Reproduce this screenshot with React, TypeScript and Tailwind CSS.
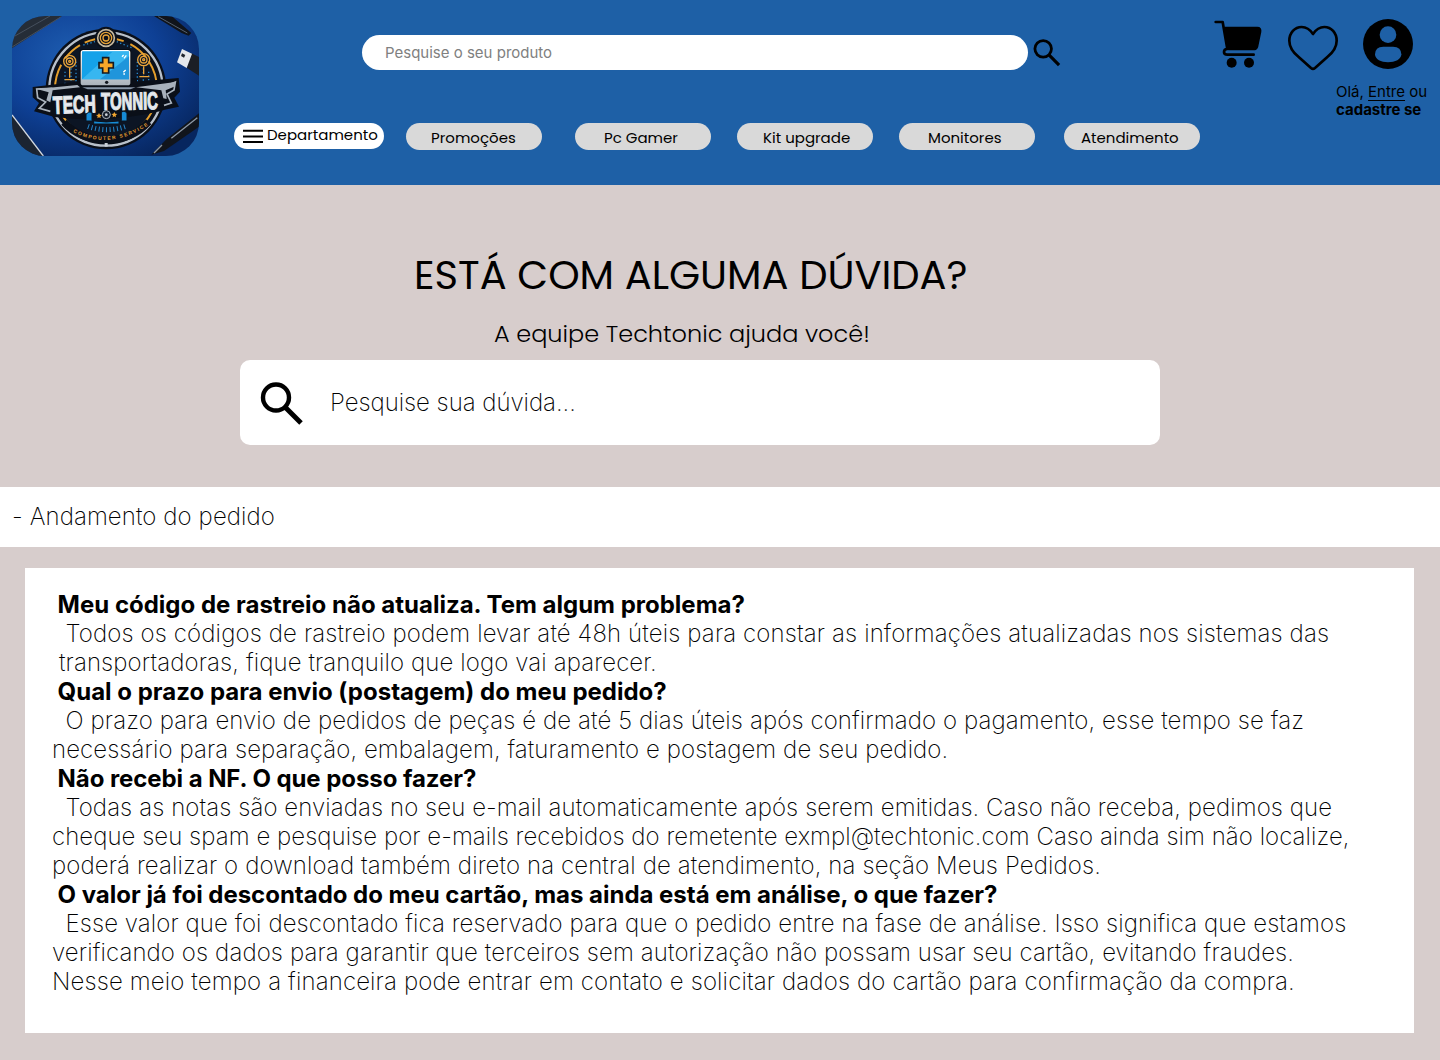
import React from "react";

const poppins = "font-[Poppins,Inter,sans-serif]";

function Logo() {
  return (
    <svg className="mt-4 ml-3 h-[140px] w-[187px] shrink-0 rounded-[33px]" viewBox="36 33 561 420" preserveAspectRatio="none">
      <defs>
        <radialGradient id="desk" cx="0.35" cy="0.3" r="0.8">
          <stop offset="0" stopColor="#1f5fb2" />
          <stop offset="0.55" stopColor="#0e4095" />
          <stop offset="1" stopColor="#07265f" />
        </radialGradient>
        <linearGradient id="steel" x1="0" y1="0" x2="0" y2="1">
          <stop offset="0" stopColor="#ffffff" />
          <stop offset="1" stopColor="#aab2bb" />
        </linearGradient>
      </defs>
      <rect x="36" y="33" width="561" height="420" fill="url(#desk)" />
      <path d="M36 33H186L36 130Z" fill="#252d37" />
      <path d="M36 98L150 33M36 126L182 36" stroke="#46505d" strokeWidth="3" />
      <path d="M36 330L130 453H36Z" fill="#1b2431" />
      <path d="M36 330L130 453" stroke="#d3d9e0" strokeWidth="4" />
      <path d="M462 33H515L574 84L566 92L545 84Z" fill="#10141b" />
      <path d="M475 35L562 84" stroke="#566271" strokeWidth="3" />
      <path d="M571 143L597 156V212L560 188Z" fill="#1b1f26" />
      <path d="M546 132L576 146L560 189L531 172Z" fill="#e5e8ec" />
      <path d="M546 145l10 5-4 8-9-5z" fill="#20252d" />
      <path d="M597 325L500 402L454 449L492 438L597 365Z" fill="#11151c" />
      <path d="M592 338L514 400M486 420L462 444" stroke="#8d98a5" strokeWidth="4" />
      <circle cx="318" cy="252" r="181" fill="#0a0f19" />
      <circle cx="318" cy="252" r="170" fill="none" stroke="#b8c0ca" strokeWidth="7" />
      <circle cx="318" cy="252" r="153" fill="#0c1524" stroke="#e59f2c" strokeWidth="6" strokeDasharray="120 22 60 16" />
      <g fill="none" stroke="#2686ca" strokeWidth="4" strokeDasharray="4 7">
        <path d="M195 200V240M213 190V240M228 170V238M412 170V238M430 190V240M446 200V240M250 120L285 110M350 110L395 128" />
        <path d="M264 364Q320 384 378 364" strokeWidth="15" strokeDasharray="3 8" />
      </g>
      <g fill="none" stroke="#e8a33a" strokeWidth="4">
        <circle cx="209" cy="169" r="18" /><circle cx="209" cy="169" r="10" /><circle cx="209" cy="169" r="3" />
        <circle cx="431" cy="164" r="18" /><circle cx="431" cy="164" r="10" /><circle cx="431" cy="164" r="3" />
        <path d="M194 224H224M418 215H448M209 188V218M431 184V208" />
      </g>
      <circle cx="318" cy="98" r="33" fill="#0b101a" />
      <g fill="none">
        <circle cx="318" cy="99" r="25" stroke="#c4b79d" strokeWidth="5" />
        <circle cx="318" cy="99" r="17" stroke="#e7a338" strokeWidth="4" />
        <circle cx="318" cy="99" r="9" stroke="#e7a338" strokeWidth="4" />
      </g>
      <path d="M98 246L231 230V219H411V230L536 219L540 260L523 278L537 305L494 314L480 319Q318 357 162 336L153 333L102 319L117 294L98 277Z" fill="#0a0f18" />
      <path d="M157 250L110 252L113 278L137 291L118 310L151 319M487 247L526 231L522 255L501 267L514 294L492 301" fill="none" stroke="#aab3bd" strokeWidth="5" />
      <path d="M110 252L232 240L240 247L158 256L151 292L139 286L146 262Z" fill="#a8b1bb" />
      <path d="M408 247L526 231L522 245L497 256L500 282L490 280L484 256Z" fill="#a8b1bb" />
      <rect x="239" y="132" width="155" height="112" rx="10" fill="#080d15" />
      <rect x="242" y="135" width="149" height="106" rx="8" fill="url(#steel)" />
      <rect x="246" y="139" width="141" height="84" rx="2" fill="#15a2e9" />
      <path d="M246 223L339 139H387V223Z" fill="#49c2f4" opacity=".65" />
      <path d="M300 223L387 154V223Z" fill="#1587d2" opacity=".7" />
      <path d="M366 155l5-5m1 10l7-9M370 202l7-7m-7 12h5" stroke="#fff" strokeWidth="4" />
      <path d="M308 158H326V173H340V189H326V204H308V189H297V173H308Z" fill="#f6a72a" stroke="#151a22" strokeWidth="5" />
      <circle cx="320" cy="232" r="5" fill="#131820" />
      <path d="M247 247H407L391 253H263Z" fill="#8997a8" />
      <g fill="#e9ecef" stroke="#dfe3e7" strokeWidth="4" fontFamily="Liberation Sans" fontWeight="700">
        <text x="160" y="326" fontSize="73" textLength="128" lengthAdjust="spacingAndGlyphs" transform="rotate(-2 160 326)">TECH</text>
        <text x="304" y="315" fontSize="73" textLength="170" lengthAdjust="spacingAndGlyphs" transform="rotate(-1 304 315)">TONNIC</text>
      </g>
      <path d="M258 328Q266 317 276 322V347Q318 355 364 347V321Q377 315 381 326V348H357V357H281V348H258Z" fill="#168bd5" stroke="#0b1420" strokeWidth="3" />
      <circle cx="319" cy="329" r="12" fill="#18202c" stroke="#aeb8c2" strokeWidth="3" />
      <circle cx="319" cy="329" r="4" fill="#d0d6dc" />
      <path d="M297 324l3 5 6 1-5 4 1 6-5-3-5 3 1-6-5-4 6-1zM343 321l3 5 6 1-5 4 1 6-5-3-5 3 1-6-5-4 6-1z" fill="#f0a530" />
      <path d="M192 352Q240 405 318 405Q396 405 446 350" fill="none" stroke="#0a0f19" strokeWidth="22" />
      <path id="serviceArc" d="M219 381Q325 438 447 360" fill="none" />
      <text fill="#e29b31" fontFamily="Liberation Sans" fontSize="15" fontWeight="700"><textPath href="#serviceArc" textLength="238">COMPOUTER SERVICE</textPath></text>
      <rect x="314" y="414" width="9" height="11" fill="#c8cfd7" />
    </svg>
  );
}

function SearchIcon({ className }: { className: string }) {
  return (
    <svg className={className} viewBox="0 0 44 44" fill="none" stroke="#000">
      <circle cx="16" cy="15.5" r="13" strokeWidth="4.4" />
      <path d="M25.5 25.5L41 41" strokeWidth="5" />
    </svg>
  );
}

function AccountIcons() {
  return (
    <svg className="h-[75px] w-60" viewBox="0 0 720 225" fill="none">
      <g stroke="#000" strokeWidth="8" strokeLinecap="round" strokeLinejoin="round">
        <path d="M47 66H68L82 147Q72 147 72 156Q72 164 82 164H161" />
        <path d="M76 84H172Q182 84 180 95L171 139Q169 147 160 147H86Z" fill="#000" />
        <path d="M339 102C329 87 317 81 305 81C284 81 268 99 268 122C268 144 279 157 296 171L333 204Q339 209 345 204L382 171C399 157 410 144 410 122C410 99 394 81 373 81C361 81 349 87 339 102Z" />
      </g>
      <circle cx="95" cy="188" r="15" fill="#000" />
      <circle cx="147" cy="188" r="15" fill="#000" />
      <circle cx="564" cy="132" r="75" fill="#000" />
      <circle cx="564" cy="104" r="25" fill="#1e60a6" />
      <path d="M550 140H579Q604 141 604 163C604 178 585 187 564 187C543 187 525 178 525 163Q525 141 550 140Z" fill="#1e60a6" />
    </svg>
  );
}

const pill = "h-[27px] w-[136px] shrink-0 rounded-full bg-[#d9d9d9] pt-[3px] text-[15px] leading-[24px] whitespace-nowrap";

function Header() {
  return (
    <header className="flex h-[185px] bg-[#1e60a6]">
      <Logo />
      <div className="ml-[35px] w-[966px] shrink-0">
        <div className="mt-[35px] ml-32 flex">
          <div className="h-[35px] w-[666px] rounded-full bg-white pl-[23px] text-[15px] leading-[35px] text-[#808080]">
            Pesquise o seu produto
          </div>
          <SearchIcon className="mt-[4px] ml-[4.5px] h-7 w-7" />
        </div>
        <nav className={`mt-[53px] flex ${poppins}`}>
          <div className="flex h-[26px] w-[150px] rounded-full bg-white pl-[9px] text-[15px] leading-[24px]">
            <svg className="mt-[6px] mr-1 h-[15px] w-5" viewBox="0 0 20 15" stroke="#000" strokeWidth="2">
              <path d="M0 1.8H20M0 7.4H20M0 13H20" />
            </svg>
            Departamento
          </div>
          <div className={`${pill} ml-[22px] pl-[25px]`}>Promoções</div>
          <div className={`${pill} ml-[33px] pl-[29px]`}>Pc Gamer</div>
          <div className={`${pill} ml-[26px] pl-[26px]`}>Kit upgrade</div>
          <div className={`${pill} ml-[26px] pl-[29px]`}>Monitores</div>
          <div className={`${pill} ml-[29px] pl-[17px]`}>Atendimento</div>
        </nav>
      </div>
      <div className="w-60 shrink-0">
        <AccountIcons />
        <div className="mt-2 ml-[136px] text-[15px] leading-[18px] whitespace-nowrap">
          <div>Olá, <span className="underline underline-offset-[3px]">Entre</span> ou</div>
          <div className="font-bold">cadastre se</div>
        </div>
      </div>
    </header>
  );
}

function Faq() {
  return (
    <section className="mt-[21px] ml-[25px] h-[465px] w-[1389px] bg-white pt-[22px] pl-[27px] text-2xl leading-[29px] font-extralight whitespace-pre">
      <h2 className="ml-[5.6px] font-bold">Meu código de rastreio não atualiza. Tem algum problema?</h2>
      <p className="ml-[13.5px] tracking-[0.123px]">Todos os códigos de rastreio podem levar até 48h úteis para constar as informações atualizadas nos sistemas das</p>
      <p className="ml-[7px] tracking-[0.11px]">transportadoras, fique tranquilo que logo vai aparecer.</p>
      <h2 className="ml-[5.6px] font-bold">Qual o prazo para envio (postagem) do meu pedido?</h2>
      <p className="ml-[13.5px] tracking-[0.1px]">O prazo para envio de pedidos de peças é de até 5 dias úteis após confirmado o pagamento, esse tempo se faz</p>
      <p className="tracking-[0.08px]">necessário para separação, embalagem, faturamento e postagem de seu pedido.</p>
      <h2 className="ml-[5.6px] font-bold tracking-[-0.07px]">Não recebi a NF. O que posso fazer?</h2>
      <p className="ml-[13.5px] tracking-[0.08px]">Todas as notas são enviadas no seu e-mail automaticamente após serem emitidas. Caso não receba, pedimos que</p>
      <p className="tracking-[0.045px]">cheque seu spam e pesquise por e-mails recebidos do remetente exmpl@techtonic.com Caso ainda sim não localize,</p>
      <p className="tracking-[0.11px]">poderá realizar o download também direto na central de atendimento, na seção Meus Pedidos.</p>
      <h2 className="ml-[5.6px] font-bold tracking-[-0.02px]">O valor já foi descontado do meu cartão, mas ainda está em análise, o que fazer?</h2>
      <p className="ml-[13.5px] tracking-[0.08px]">Esse valor que foi descontado fica reservado para que o pedido entre na fase de análise. Isso significa que estamos</p>
      <p className="tracking-[0.1px]">verificando os dados para garantir que terceiros sem autorização não possam usar seu cartão, evitando fraudes.</p>
      <p className="tracking-[0.135px]">Nesse meio tempo a financeira pode entrar em contato e solicitar dados do cartão para confirmação da compra.</p>
    </section>
  );
}

export default function App() {
  return (
    <div className="h-[1060px] w-[1440px] overflow-hidden bg-[#d7cdcc] font-[Inter,sans-serif] text-black">
      <Header />
      <section className="flex h-[302px] flex-col">
        <h1 className={`mt-[60px] ml-[414px] text-[40px] leading-[60px] whitespace-nowrap ${poppins}`}>ESTÁ COM ALGUMA DÚVIDA?</h1>
        <p className={`mt-[11px] ml-[494px] text-2xl leading-9 font-light whitespace-nowrap ${poppins}`}>A equipe Techtonic ajuda você!</p>
        <div className="mt-2 ml-60 flex h-[85px] w-[920px] rounded-[10px] bg-white">
          <SearchIcon className="mt-[21.5px] ml-[19.5px] h-11 w-11" />
          <span className="ml-[26.5px] text-2xl leading-[85px] font-extralight tracking-[-0.04px]">Pesquise sua dúvida...</span>
        </div>
      </section>
      <div className="h-[60px] bg-white pl-3 text-2xl leading-[60px] font-extralight tracking-[0.09px]">- Andamento do pedido</div>
      <Faq />
    </div>
  );
}
